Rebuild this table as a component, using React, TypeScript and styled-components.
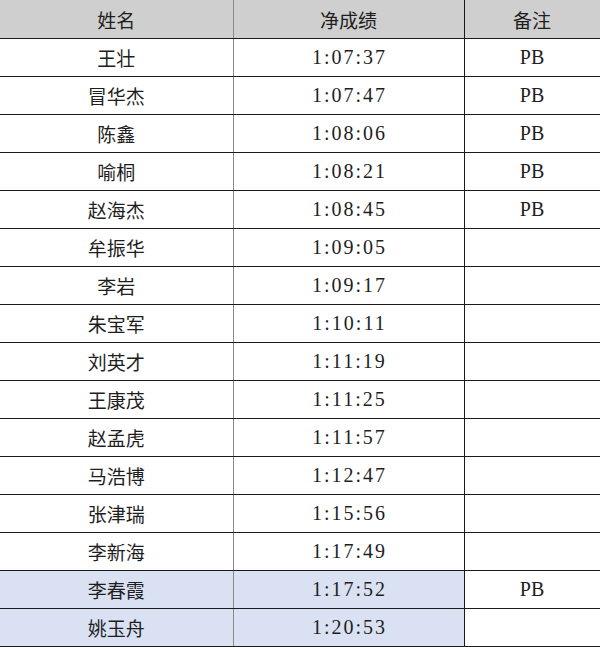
import { createGlobalStyle, styled } from "styled-components";

const records = [
  { name: "王壮", time: "1:07:37", note: "PB" },
  { name: "冒华杰", time: "1:07:47", note: "PB" },
  { name: "陈鑫", time: "1:08:06", note: "PB" },
  { name: "喻桐", time: "1:08:21", note: "PB" },
  { name: "赵海杰", time: "1:08:45", note: "PB" },
  { name: "牟振华", time: "1:09:05", note: "" },
  { name: "李岩", time: "1:09:17", note: "" },
  { name: "朱宝军", time: "1:10:11", note: "" },
  { name: "刘英才", time: "1:11:19", note: "" },
  { name: "王康茂", time: "1:11:25", note: "" },
  { name: "赵孟虎", time: "1:11:57", note: "" },
  { name: "马浩博", time: "1:12:47", note: "" },
  { name: "张津瑞", time: "1:15:56", note: "" },
  { name: "李新海", time: "1:17:49", note: "" },
  { name: "李春霞", time: "1:17:52", note: "PB", marked: true },
  { name: "姚玉舟", time: "1:20:53", note: "", marked: true },
];

const App = () => {
  return (
    <>
      <GlobalStyle />
      <Table>
        <colgroup>
          <col style={{ width: 233 }} />
          <col style={{ width: 231 }} />
          <col style={{ width: 136 }} />
        </colgroup>
        <thead>
          <tr>
            <HeadCell $first>姓名</HeadCell>
            <HeadCell>净成绩</HeadCell>
            <HeadCell>备注</HeadCell>
          </tr>
        </thead>
        <tbody>
          {records.map((r) => (
            <tr key={r.name}>
              <NameCell $marked={r.marked}>{r.name}</NameCell>
              <TimeCell $marked={r.marked}>{r.time}</TimeCell>
              <NoteCell>{r.note}</NoteCell>
            </tr>
          ))}
        </tbody>
      </Table>
    </>
  );
};

export default App;

const GlobalStyle = createGlobalStyle`
  html, body {
    margin: 0;
    padding: 0;
    background: #ffffff;
  }
`;

const Table = styled.table`
  width: 600px;
  table-layout: fixed;
  border-collapse: collapse;
  color: #1e1e1e;
  font-size: 20px;
`;

const HeadCell = styled.th<{ $first?: boolean }>`
  height: 38px;
  padding: 0;
  font-weight: 400;
  font-family: "Noto Sans CJK SC", sans-serif;
  font-size: 19px;
  text-align: center;
  background: #d0cfcf;
  border-bottom: 1px solid #1a1a1a;
  border-right: 1px solid ${({ $first }) => ($first ? "#8a8a8a" : "#1a1a1a")};
`;

const Cell = styled.td<{ $marked?: boolean }>`
  height: 37px;
  padding: 0;
  text-align: center;
  font-family: "Liberation Serif", "Noto Sans CJK SC", serif;
  font-size: 20px;
  color: #1e1e1e;
  background: ${({ $marked }) => ($marked ? "#d9e1f2" : "#ffffff")};
  border-bottom: 1px solid #1a1a1a;
  border-right: 1px solid #1a1a1a;
`;

const NameCell = styled(Cell)`
  font-family: "Noto Sans CJK SC", sans-serif;
  font-size: 19px;
  border-right-color: #8a8a8a;
`;

const TimeCell = styled(Cell)`
  letter-spacing: 2px;
  padding-left: 2px;
`;

const NoteCell = styled(Cell)`
  font-family: "Liberation Serif", serif;
`;
